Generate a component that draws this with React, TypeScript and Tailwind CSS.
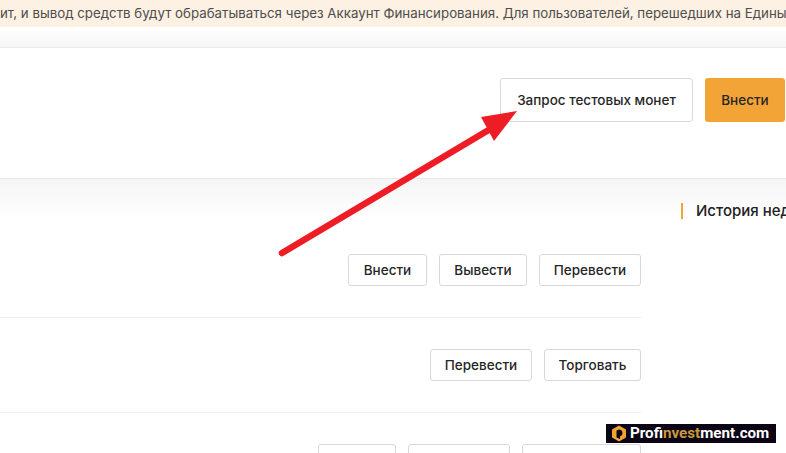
const font = { fontFamily: 'Inter, "Noto Sans", sans-serif' }
const logoFont = { fontFamily: 'Roboto, sans-serif' }

function Btn({ label, w }: { label: string; w: string }) {
  return (
    <button className={`${w} h-[32px] rounded-[3px] border border-[#d8d8d8] bg-white text-[13.5px] font-medium text-[#262626]`}>
      {label}
    </button>
  )
}

function Row({ children }: { children: React.ReactNode }) {
  return <div className="flex justify-end gap-3 border-b border-[#efefef] pt-[31px] pb-[31px]">{children}</div>
}

export default function App() {
  return (
    <div style={font} className="relative h-[453px] w-[786px] overflow-hidden bg-white">
      {/* баннер */}
      <div className="flex h-[27px] items-center overflow-hidden bg-[#fdf1e3] text-[13.3px] whitespace-nowrap text-[#4d4d4d]">
        ит, и вывод средств будут обрабатываться через Аккаунт Финансирования. Для пользователей, перешедших на Единый торговый аккаунт
      </div>
      <div className="h-[20px] bg-gradient-to-b from-white to-[#f6f6f6]" />

      {/* шапка */}
      <div className="flex h-[132px] items-start justify-end gap-3 border-y border-[#e9e9e9] pt-[30px] pr-[1px]">
        <button className="h-[44px] w-[193px] rounded-[3px] border border-[#d8d8d8] bg-white text-[13.5px] font-medium text-[#262626]">
          Запрос тестовых монет
        </button>
        <button className="h-[44px] w-[80px] rounded-[3px] bg-[#f2a536] text-[13.5px] font-medium text-[#262626]">
          Внести
        </button>
      </div>

      {/* счета */}
      <div className="flex h-[274px] bg-gradient-to-b from-[#f5f5f5] to-white to-[40px]">
        <div className="w-[641px] pt-[44px]">
          <Row>
            <Btn label="Внести" w="w-[79px]" />
            <Btn label="Вывести" w="w-[88px]" />
            <Btn label="Перевести" w="w-[102px]" />
          </Row>
          <Row>
            <Btn label="Перевести" w="w-[102px]" />
            <Btn label="Торговать" w="w-[97px]" />
          </Row>
          <Row>
            <Btn label="Внести" w="w-[78px]" />
            <Btn label="Вывести" w="w-[102px]" />
            <Btn label="Перевести" w="w-[119px]" />
          </Row>
        </div>
        <div className="ml-[40px] min-w-0 flex-1 overflow-hidden pt-[24px]">
          <div className="h-4 border-l-2 border-[#f2a536] pl-[13px] text-[15px] leading-4 font-medium whitespace-nowrap text-[#212121]">
            История недавних
          </div>
        </div>
      </div>

      {/* стрелка */}
      <svg className="absolute top-0 left-0" width="786" height="453" viewBox="0 0 786 453">
        <line x1="282" y1="253" x2="492" y2="128" stroke="#ee1c25" strokeWidth="6.5" strokeLinecap="round" />
        <polygon points="517,111 481,117 494,141" fill="#ee1c25" />
      </svg>

      {/* водяной знак */}
      <div style={logoFont} className="absolute top-[424px] left-[606px] flex h-[19px] w-[170px] items-center gap-[3px] bg-[#0a0414] pl-[5px] text-[15.2px] leading-none font-bold text-white">
        <svg width="16" height="17" viewBox="0 0 16 17">
          <path d="M8 .5 15 4.5v8L8 16.5 1 12.5v-8Z" fill="#f0a530" />
          <path d="M8 4.5a3.6 3.6 0 0 1 1 7V14l-3.5-1.5V5.5Z" fill="#0a0414" />
        </svg>
        <span>
          Prof<span className="text-[#c9973c]">invest</span>ment.com
        </span>
      </div>
    </div>
  )
}
